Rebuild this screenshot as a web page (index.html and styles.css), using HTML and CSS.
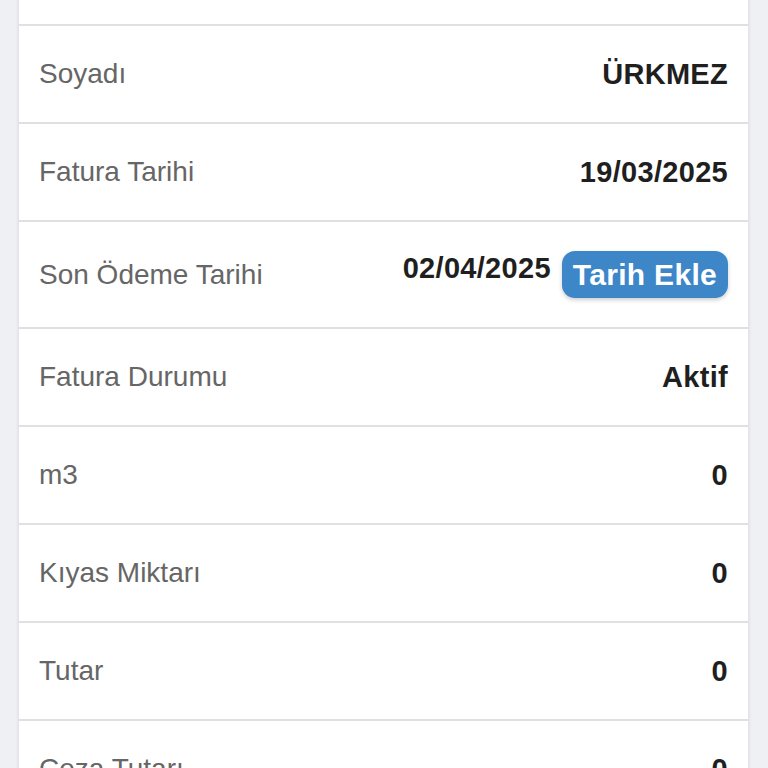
FILE: index.html
```html
<html>
    <head>
        <title>Fatura Detayı</title>
        <link rel="stylesheet" href="styles.css">
    </head>
    <body>
        <div class="card">
            <div class="row first">
                <span class="label">Adı</span>
                <span class="value">-</span>
            </div>
            <div class="row">
                <span class="label">Soyadı</span>
                <span class="value">ÜRKMEZ</span>
            </div>
            <div class="row">
                <span class="label">Fatura Tarihi</span>
                <span class="value">19/03/2025</span>
            </div>
            <div class="row">
                <span class="label">Son Ödeme Tarihi</span>
                <div class="value-group">
                    <span class="value date">02/04/2025</span>
                    <button class="add-date">Tarih Ekle</button>
                </div>
            </div>
            <div class="row">
                <span class="label">Fatura Durumu</span>
                <span class="value">Aktif</span>
            </div>
            <div class="row">
                <span class="label">m3</span>
                <span class="value">0</span>
            </div>
            <div class="row">
                <span class="label">Kıyas Miktarı</span>
                <span class="value">0</span>
            </div>
            <div class="row">
                <span class="label">Tutar</span>
                <span class="value">0</span>
            </div>
            <div class="row">
                <span class="label">Ceza Tutarı</span>
                <span class="value">0</span>
            </div>
            <div class="row">
                <span class="label">Toplam</span>
                <span class="value">0</span>
            </div>
        </div>
    </body>
</html>
```

FILE: styles.css
```css
body {
    margin: 0;
    background-color: #eef0f3;
    font-family: "Liberation Sans", Arial, sans-serif;
    overflow: hidden;
}

.card {
    margin: 0 20px 0 19px;
    background-color: #ffffff;
    box-shadow: 0 0 4px rgba(0, 0, 0, 0.12);
}

.row {
    display: flex;
    flex-direction: row;
    justify-content: space-between;
    align-items: center;
    padding: 29px 20px;
    line-height: 38px;
    border-bottom: 2px solid #e0e0e2;
}

.first {
    margin-top: -72px;
}

.label {
    font-size: 28px;
    color: #666666;
}

.value {
    font-size: 29px;
    font-weight: bold;
    color: #1f1f1f;
    letter-spacing: 0.3px;
}

.value-group {
    display: flex;
    align-items: flex-start;
    column-gap: 11px;
}

.date {
    line-height: 34px;
}

.add-date {
    height: 47px;
    padding: 0 11px;
    border: none;
    border-radius: 13px;
    background-color: #3d86c8;
    color: #ffffff;
    font-family: "Liberation Sans", Arial, sans-serif;
    font-size: 30px;
    font-weight: bold;
    letter-spacing: 0.3px;
    box-shadow: 0 2px 4px rgba(0, 0, 0, 0.2);
}
```
